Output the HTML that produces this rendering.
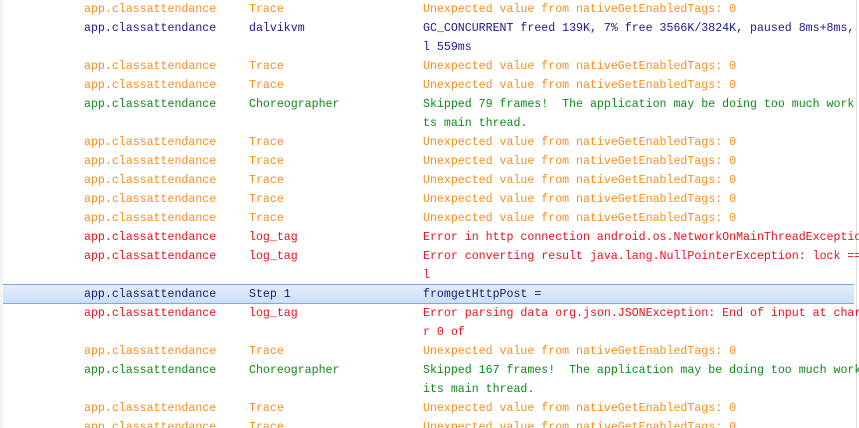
<!DOCTYPE html>
<html><head><style>
html,body{margin:0;padding:0;background:#fff;width:859px;height:428px;overflow:hidden;position:relative}
.r{position:absolute;left:0;width:859px;height:19px;font:11.6px/19px "Liberation Mono",monospace;white-space:pre}
.r span{position:absolute;top:0}
.a{left:84px}.b{left:249px}.c{left:423px}
.o{color:#f78f1e}.n{color:#1a1a8c}.g{color:#11891a}.d{color:#e8121c}.s{color:#1c1c6e}
.sel{position:absolute;left:3px;top:284px;width:851px;height:18px;background:linear-gradient(#e3eefb,#c9dff8);border-top:1px solid #85a9d6;border-bottom:1px solid #85a9d6}
.lm{position:absolute;left:0;top:0;width:3px;height:428px;background:#f4f4f4}
.sb{position:absolute;left:856px;top:0;width:1px;height:428px;background:#e0e0e0}
</style></head><body>
<div class="lm"></div><div class="sb"></div>
<div class="sel"></div>
<div class="r o" style="top:0"><span class="a">app.classattendance</span><span class="b">Trace</span><span class="c">Unexpected value from nativeGetEnabledTags: 0</span></div>
<div class="r n" style="top:19px"><span class="a">app.classattendance</span><span class="b">dalvikvm</span><span class="c">GC_CONCURRENT freed 139K, 7% free 3566K/3824K, paused 8ms+8ms, tota</span></div>
<div class="r n" style="top:38px"><span class="c">l 559ms</span></div>
<div class="r o" style="top:57px"><span class="a">app.classattendance</span><span class="b">Trace</span><span class="c">Unexpected value from nativeGetEnabledTags: 0</span></div>
<div class="r o" style="top:76px"><span class="a">app.classattendance</span><span class="b">Trace</span><span class="c">Unexpected value from nativeGetEnabledTags: 0</span></div>
<div class="r g" style="top:95px"><span class="a">app.classattendance</span><span class="b">Choreographer</span><span class="c">Skipped 79 frames!  The application may be doing too much work on</span></div>
<div class="r g" style="top:114px"><span class="c">ts main thread.</span></div>
<div class="r o" style="top:133px"><span class="a">app.classattendance</span><span class="b">Trace</span><span class="c">Unexpected value from nativeGetEnabledTags: 0</span></div>
<div class="r o" style="top:152px"><span class="a">app.classattendance</span><span class="b">Trace</span><span class="c">Unexpected value from nativeGetEnabledTags: 0</span></div>
<div class="r o" style="top:171px"><span class="a">app.classattendance</span><span class="b">Trace</span><span class="c">Unexpected value from nativeGetEnabledTags: 0</span></div>
<div class="r o" style="top:190px"><span class="a">app.classattendance</span><span class="b">Trace</span><span class="c">Unexpected value from nativeGetEnabledTags: 0</span></div>
<div class="r o" style="top:209px"><span class="a">app.classattendance</span><span class="b">Trace</span><span class="c">Unexpected value from nativeGetEnabledTags: 0</span></div>
<div class="r d" style="top:228px"><span class="a">app.classattendance</span><span class="b">log_tag</span><span class="c">Error in http connection android.os.NetworkOnMainThreadExceptio</span></div>
<div class="r d" style="top:247px"><span class="a">app.classattendance</span><span class="b">log_tag</span><span class="c">Error converting result java.lang.NullPointerException: lock == nul</span></div>
<div class="r d" style="top:266px"><span class="c">l</span></div>
<div class="r s" style="top:285px"><span class="a">app.classattendance</span><span class="b">Step 1</span><span class="c">fromgetHttpPost =</span></div>
<div class="r d" style="top:304px"><span class="a">app.classattendance</span><span class="b">log_tag</span><span class="c">Error parsing data org.json.JSONException: End of input at characte</span></div>
<div class="r d" style="top:323px"><span class="c">r 0 of</span></div>
<div class="r o" style="top:342px"><span class="a">app.classattendance</span><span class="b">Trace</span><span class="c">Unexpected value from nativeGetEnabledTags: 0</span></div>
<div class="r g" style="top:361px"><span class="a">app.classattendance</span><span class="b">Choreographer</span><span class="c">Skipped 167 frames!  The application may be doing too much work on</span></div>
<div class="r g" style="top:380px"><span class="c">its main thread.</span></div>
<div class="r o" style="top:399px"><span class="a">app.classattendance</span><span class="b">Trace</span><span class="c">Unexpected value from nativeGetEnabledTags: 0</span></div>
<div class="r o" style="top:418px"><span class="a">app.classattendance</span><span class="b">Trace</span><span class="c">Unexpected value from nativeGetEnabledTags: 0</span></div>
</body></html>
